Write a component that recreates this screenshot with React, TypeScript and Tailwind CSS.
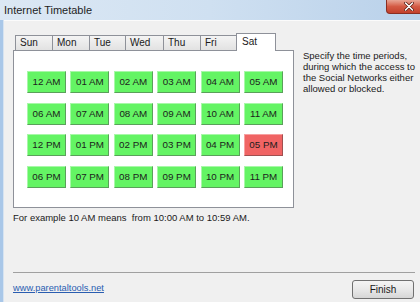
const tabs = [
  { label: "Sun", w: "w-[37px]" },
  { label: "Mon", w: "w-[37px]" },
  { label: "Tue", w: "w-[36px]" },
  { label: "Wed", w: "w-[38px]" },
  { label: "Thu", w: "w-[37px]" },
  { label: "Fri", w: "w-[36px]" },
]

const hours = [
  "12 AM", "01 AM", "02 AM", "03 AM", "04 AM", "05 AM",
  "06 AM", "07 AM", "08 AM", "09 AM", "10 AM", "11 AM",
  "12 PM", "01 PM", "02 PM", "03 PM", "04 PM", "05 PM",
  "06 PM", "07 PM", "08 PM", "09 PM", "10 PM", "11 PM",
]

const blocked = ["05 PM"]

const HourButton = ({ label }: { label: string }) => {
  const off = blocked.includes(label)
  return (
    <div
      className={
        off
          ? "w-[39px] h-[22px] flex items-center justify-center bg-[#f06464] border border-t-[#f7a0a0] border-l-[#f7a0a0] border-r-[#a05050] border-b-[#a05050]"
          : "w-[39px] h-[22px] flex items-center justify-center bg-[#64f464] border border-t-[#a8f8a8] border-l-[#a8f8a8] border-r-[#5aa05a] border-b-[#5aa05a]"
      }
    >
      <span className="text-[9.8px] text-[#1c1c1c] leading-none">{label}</span>
    </div>
  )
}

export default function App() {
  return (
    <div
      className="w-[420px] h-[302px] overflow-hidden flex flex-col bg-[#f0f0f0] text-[#1a1a1a]"
      style={{ fontFamily: '"Liberation Sans", Arial, sans-serif' }}
    >
      {/* title bar */}
      <div className="relative h-[20px] bg-gradient-to-r from-[#dce8f4] via-[#cfe0f1] to-[#b9d1ea] flex items-center px-[4px]">
        <span className="text-[11px] text-[#1e1e1e]">Internet Timetable</span>
        <div className="absolute top-0 left-[386px] w-[44px] h-[14px] rounded-b-[4px] border border-t-0 border-[#8a2e22] bg-gradient-to-b from-[#e8a595] via-[#d45a44] to-[#c2402c] flex items-center justify-start pl-[17px]">
          <svg width="10" height="9" viewBox="0 0 10 9">
            <path d="M1.5 1 L8.5 8 M8.5 1 L1.5 8" stroke="#5a1a10" strokeWidth="3" strokeLinecap="round" />
            <path d="M1.5 1 L8.5 8 M8.5 1 L1.5 8" stroke="#ffffff" strokeWidth="1.6" strokeLinecap="round" />
          </svg>
        </div>
      </div>

      <div className="flex flex-1">
        <div className="w-[4px] bg-[#a9c7e8] border-r border-[#d6e3f1]" />
        <div className="flex-1 flex flex-col pl-[9px] pt-[12px] border-t border-[#fbfbfb]">
          <div className="flex gap-[9px]">
            <div className="w-[281px] flex flex-col">
              {/* tabs */}
              <div className="h-[17px] flex items-end pl-[2px]">
                {tabs.map((t) => (
                  <div
                    key={t.label}
                    className={`${t.w} h-[15px] border-l border-t border-[#8e9199] bg-gradient-to-b from-[#f4f4f4] to-[#e2e2e2] text-[10px] leading-[14px] pl-[4px]`}
                  >
                    {t.label}
                  </div>
                ))}
                <div className="relative z-10 w-[40px] h-[18px] -mb-px border-l border-r border-t border-[#8e9199] bg-white text-[10px] leading-[14px] pl-[5px] pt-[1px]">
                  Sat
                </div>
              </div>
              {/* panel */}
              <div className="h-[158px] bg-white border border-[#8e9199] pl-[13px] pt-[20px]">
                <div className="grid grid-cols-[repeat(6,39px)] gap-x-[4.4px] gap-y-[9.6px]">
                  {hours.map((h) => (
                    <HourButton key={h} label={h} />
                  ))}
                </div>
              </div>
            </div>
            <p className="w-[116px] mt-[17px] text-[9.5px] leading-[11px]">
              Specify the time periods, during which the access to the Social Networks either allowed or blocked.
            </p>
          </div>

          <p className="mt-[4px] text-[9.5px] leading-[12px] whitespace-pre">
            {"For example 10 AM means  from 10:00 AM to 10:59 AM."}
          </p>

          <div className="flex-1" />
          <div className="mr-[5px] h-px bg-[#a0a0a0]" />
          <div className="flex items-center justify-between pr-[6px] h-[29px] pt-[3px]">
            <span className="text-[9.3px] text-[#2a5db0] underline">www.parentaltools.net</span>
            <div className="w-[62px] h-[19px] rounded-[3px] border border-[#707070] bg-gradient-to-b from-[#f4f4f4] via-[#e8e8e8] to-[#d6d6d6] flex items-center justify-center text-[10px]">
              Finish
            </div>
          </div>
        </div>
      </div>
    </div>
  )
}
